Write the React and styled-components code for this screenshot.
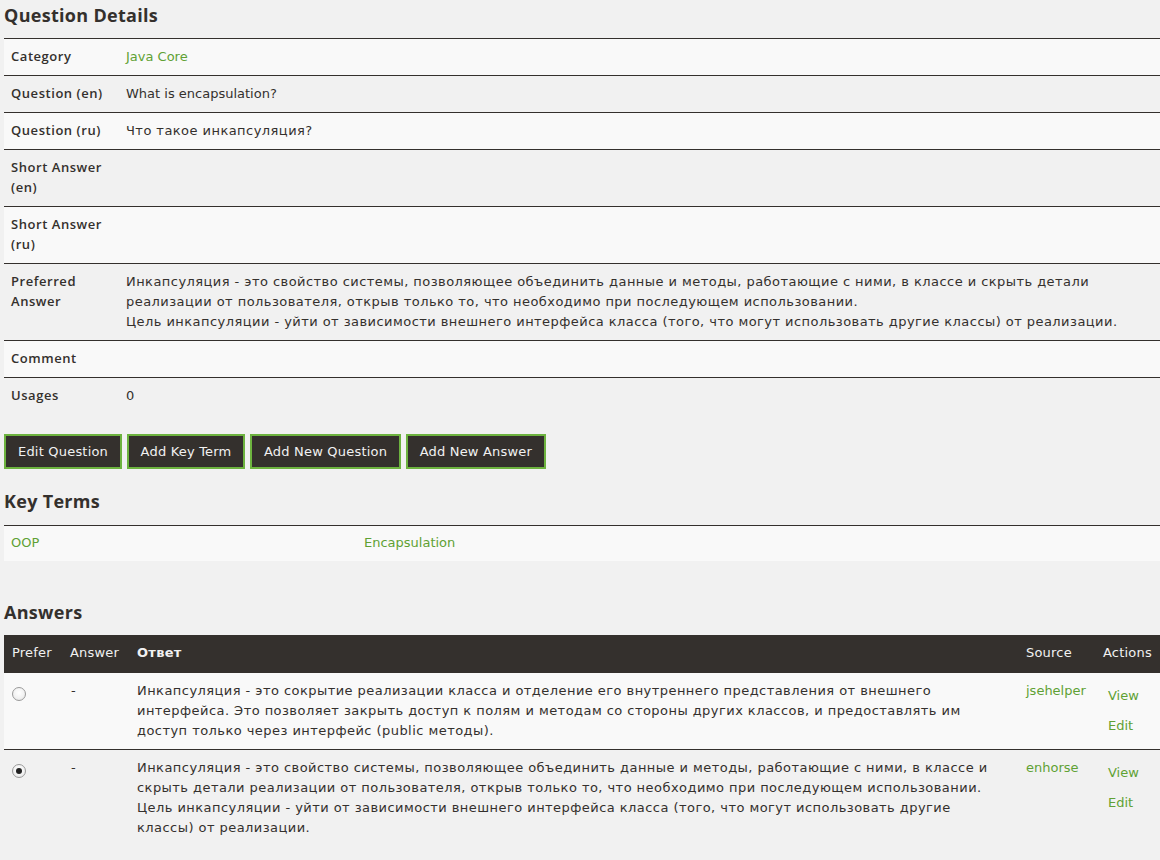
import React from "react";
import styled, { createGlobalStyle } from "styled-components";

const GlobalStyle = createGlobalStyle`
  html, body {
    margin: 0;
    padding: 0;
    background: #f1f1f1;
  }
  body {
    font-family: "DejaVu Sans", "Liberation Sans", sans-serif;
    font-size: 13px;
    line-height: 20px;
    color: #34302d;
  }
`;

const Page = styled.div`
  padding: 0 0 20px 4px;
`;

const SectionTitle = styled.h2`
  font-family: "Open Sans", "DejaVu Sans", sans-serif;
  font-weight: 700;
  font-size: 18px;
  line-height: 22px;
  letter-spacing: 0.3px;
  margin: ${(p) => p.$top || 4}px 0 ${(p) => p.$bottom || 12}px 0;
  color: #34302d;
`;

const RuText = styled.span`
  letter-spacing: 0.45px;
`;

const Table = styled.table`
  width: 100%;
  border-collapse: collapse;
  table-layout: fixed;
`;

const Row = styled.tr`
  border-top: 1px solid #34302d;
  background: ${(p) => (p.$light ? "#f9f9f9" : "transparent")};
`;

const LabelCell = styled.th`
  width: 100px;
  padding: 7px 7px 9px 7px;
  text-align: left;
  vertical-align: top;
  font-family: "Open Sans", "DejaVu Sans", sans-serif;
  font-weight: 600;
  letter-spacing: 0.55px;
  color: #34302d;
`;

const ValueCell = styled.td`
  padding: 8px;
  vertical-align: top;
`;

const Link = styled.a`
  color: #5fa134;
  text-decoration: none;
  cursor: pointer;
`;

const ActionLink = styled(Link)`
  display: block;
  padding: 5px;
`;

const ButtonBar = styled.div`
  display: flex;
  gap: 4.5px;
  margin-top: 20px;
`;

const Button = styled.button`
  font-family: "DejaVu Sans", sans-serif;
  font-size: 13px;
  line-height: 19px;
  letter-spacing: 0.2px;
  color: #f1f1f1;
  background: #34302d;
  border: 2px solid #6db33f;
  padding: 6px 12px;
  cursor: pointer;
`;

const HeadRow = styled.tr`
  background: #34302d;
`;

const HeadCell = styled.th`
  width: ${(p) => (p.$w ? `${p.$w}px` : "auto")};
  padding: 8px 8px 9px;
  text-align: left;
  vertical-align: top;
  color: #f1f1f1;
  font-weight: ${(p) => (p.$bold ? 700 : 400)};
  letter-spacing: ${(p) => (p.$bold ? "0.3px" : "0.2px")};
`;

const KeyCell = styled.td`
  width: ${(p) => (p.$w ? `${p.$w}px` : "auto")};
  padding: 7px 7px 8px;
  vertical-align: top;
`;

const AnswerRow = styled.tr`
  border-top: 1px solid #34302d;
  background: ${(p) => (p.$light ? "#f9f9f9" : "transparent")};
`;

const AnswerCell = styled.td`
  padding: 8px;
  vertical-align: top;
`;

const DashCell = styled(AnswerCell)`
  padding-left: 9px;
`;

const ActionsCell = styled.td`
  padding: 8px 0 8px 8px;
  vertical-align: top;
`;

const Radio = styled.input.attrs({ type: "radio" })`
  appearance: none;
  -webkit-appearance: none;
  display: block;
  width: 14px;
  height: 14px;
  margin: 6px 0 0 0;
  border-radius: 50%;
  border: 1px solid #9a9a9a;
  background: radial-gradient(circle at 50% 40%, #ffffff 0%, #f2f2f2 55%, #e0e0e0 100%);
  box-sizing: border-box;
  position: relative;
  &:checked::after {
    content: "";
    position: absolute;
    left: 50%;
    top: 50%;
    width: 6px;
    height: 6px;
    margin: -3px 0 0 -3px;
    border-radius: 50%;
    background: #222;
  }
`;

const preferredText = (
  <RuText>
    Инкапсуляция - это свойство системы, позволяющее объединить данные и методы, работающие с ними, в классе и скрыть детали реализации от пользователя, открыв только то, что необходимо при последующем использовании.
    <br />
    Цель инкапсуляции - уйти от зависимости внешнего интерфейса класса (того, что могут использовать другие классы) от реализации.
  </RuText>
);

const details = [
  { label: "Category", value: <Link>Java Core</Link> },
  { label: "Question (en)", value: "What is encapsulation?" },
  { label: "Question (ru)", value: <RuText>Что такое инкапсуляция?</RuText> },
  { label: "Short Answer (en)", value: "" },
  { label: "Short Answer (ru)", value: "" },
  { label: "Preferred Answer", value: preferredText },
  { label: "Comment", value: "" },
  { label: "Usages", value: "0" },
];

const answers = [
  {
    checked: false,
    text: (
      <RuText>
        Инкапсуляция - это сокрытие реализации класса и отделение его внутреннего представления от внешнего интерфейса. Это позволяет закрыть доступ к полям и методам со стороны других классов, и предоставлять им доступ только через интерфейс (public методы).
      </RuText>
    ),
    source: "jsehelper",
  },
  {
    checked: true,
    text: preferredText,
    source: "enhorse",
  },
];

export default function App() {
  return (
    <Page>
      <GlobalStyle />
      <SectionTitle $top={4} $bottom={12}>Question Details</SectionTitle>
      <Table>
        <tbody>
          {details.map((d, i) => (
            <Row key={d.label} $light={i % 2 === 0}>
              <LabelCell>{d.label}</LabelCell>
              <ValueCell>{d.value}</ValueCell>
            </Row>
          ))}
        </tbody>
      </Table>

      <ButtonBar>
        <Button>Edit Question</Button>
        <Button>Add Key Term</Button>
        <Button>Add New Question</Button>
        <Button>Add New Answer</Button>
      </ButtonBar>

      <SectionTitle $top={21} $bottom={13}>Key Terms</SectionTitle>
      <Table>
        <tbody>
          <Row $light>
            <KeyCell $w={339}><Link>OOP</Link></KeyCell>
            <KeyCell><Link>Encapsulation</Link></KeyCell>
          </Row>
        </tbody>
      </Table>

      <SectionTitle $top={40} $bottom={12}>Answers</SectionTitle>
      <Table>
        <thead>
          <HeadRow>
            <HeadCell $w={42}>Prefer</HeadCell>
            <HeadCell $w={51}>Answer</HeadCell>
            <HeadCell $bold>Ответ</HeadCell>
            <HeadCell $w={61}>Source</HeadCell>
            <HeadCell $w={49}>Actions</HeadCell>
          </HeadRow>
        </thead>
        <tbody>
          {answers.map((a, i) => (
            <AnswerRow key={a.source} $light={i % 2 === 0}>
              <AnswerCell>
                <Radio name="prefer" defaultChecked={a.checked} readOnly />
              </AnswerCell>
              <DashCell>-</DashCell>
              <AnswerCell>{a.text}</AnswerCell>
              <AnswerCell><Link>{a.source}</Link></AnswerCell>
              <ActionsCell>
                <ActionLink>View</ActionLink>
                <ActionLink>Edit</ActionLink>
              </ActionsCell>
            </AnswerRow>
          ))}
        </tbody>
      </Table>
    </Page>
  );
}
